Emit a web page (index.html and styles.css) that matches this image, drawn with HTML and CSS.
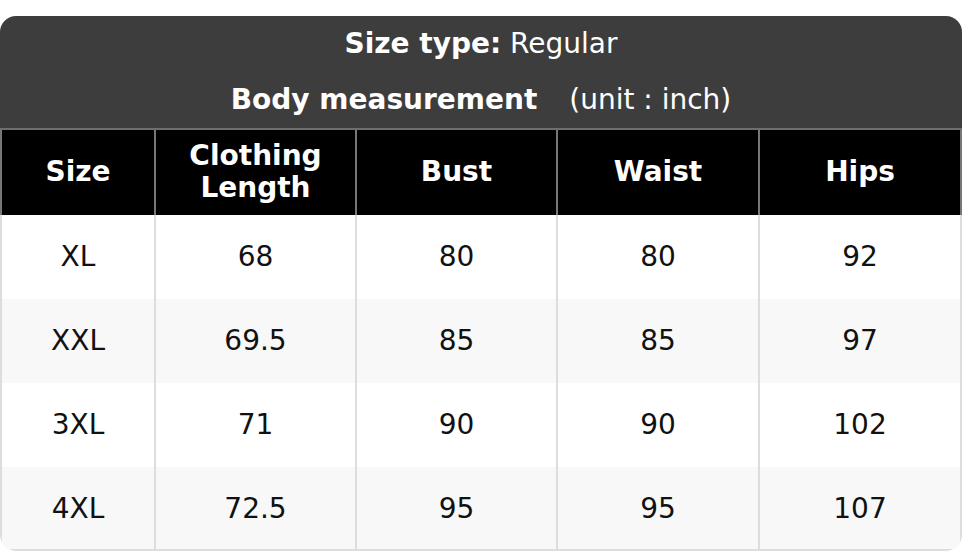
FILE: index.html
```html
<!DOCTYPE html>
<html>
<head>
<meta charset="utf-8">
<link rel="stylesheet" href="styles.css">
</head>
<body>
<div class="chart">
  <div class="title">
    <div class="title-line"><span><b>Size type:</b> Regular</span></div>
    <div class="title-line"><span><b>Body measurement</b><span class="unit">(unit : inch)</span></span></div>
  </div>
  <div class="row head">
    <div class="cell">Size</div>
    <div class="cell">Clothing<br>Length</div>
    <div class="cell">Bust</div>
    <div class="cell">Waist</div>
    <div class="cell">Hips</div>
  </div>
  <div class="body">
    <div class="row">
      <div class="cell">XL</div><div class="cell">68</div><div class="cell">80</div><div class="cell">80</div><div class="cell">92</div>
    </div>
    <div class="row alt">
      <div class="cell">XXL</div><div class="cell">69.5</div><div class="cell">85</div><div class="cell">85</div><div class="cell">97</div>
    </div>
    <div class="row">
      <div class="cell">3XL</div><div class="cell">71</div><div class="cell">90</div><div class="cell">90</div><div class="cell">102</div>
    </div>
    <div class="row alt">
      <div class="cell">4XL</div><div class="cell">72.5</div><div class="cell">95</div><div class="cell">95</div><div class="cell">107</div>
    </div>
  </div>
</div>
</body>
</html>
```
FILE: styles.css
```css
html, body {
  margin: 0;
  padding: 0;
  background: #ffffff;
}
body {
  padding-top: 16px;
  font-family: "DejaVu Sans", Verdana, sans-serif;
  font-size: 28px;
}
.chart {
  width: 962px;
  border-radius: 16px;
  overflow: hidden;
}
.title {
  background: #3d3d3d;
  color: #ffffff;
  border-bottom: 2px solid #6f6f6f;
}
.title-line {
  height: 56px;
  display: flex;
  align-items: center;
  justify-content: center;
  padding-bottom: 2px;
  box-sizing: border-box;
}
.title-line b {
  font-weight: bold;
}
.unit {
  margin-left: 32px;
}
.row {
  display: grid;
  grid-template-columns: 152px 201px 201px 202px 1fr;
}
.cell {
  display: flex;
  align-items: center;
  justify-content: center;
  text-align: center;
}
.head {
  background: #000000;
  color: #ffffff;
  font-weight: bold;
  height: 85px;
  border-left: 2px solid #777777;
  border-right: 2px solid #777777;
  box-sizing: border-box;
  line-height: 1.13;
}
.head .cell {
  padding-bottom: 2px;
}
.head .cell + .cell {
  border-left: 2px solid #777777;
}
.body {
  border: 2px solid #dddddd;
  border-top: 0;
  border-radius: 0 0 16px 16px;
  color: #111111;
}
.body .row {
  height: 84px;
  background: #ffffff;
}
.body .row .cell {
  padding-bottom: 2px;
}
.body .row.alt {
  background: #f8f8f8;
}
.body .cell + .cell {
  border-left: 2px solid #dddddd;
}
.body .row:last-child {
  height: 82px;
}
.body .row:last-child .cell {
  padding-bottom: 0;
}
```
